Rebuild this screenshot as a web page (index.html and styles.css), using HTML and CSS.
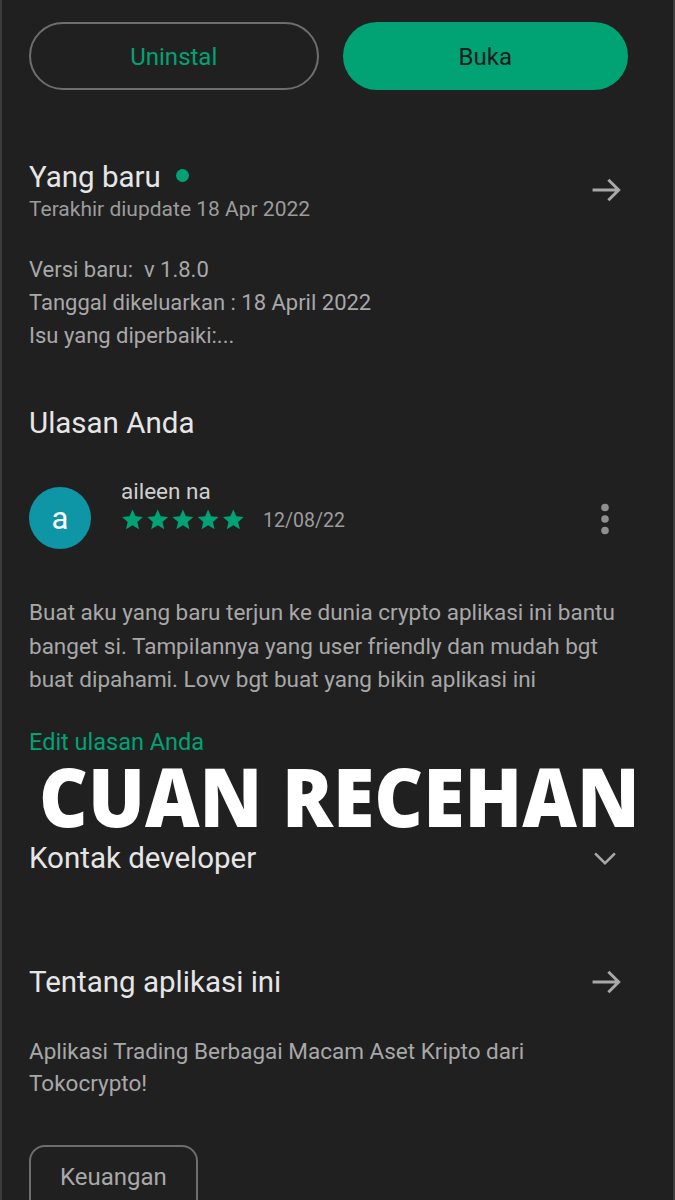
FILE: index.html
```html
<!DOCTYPE html>
<html>
  <head>
    <title>Tokocrypto - Detail Aplikasi</title>
    <link rel="stylesheet" href="styles.css">
  </head>
  <body>
    <div class="screen">
      <div class="actions">
        <button class="btn btn-outline">Uninstal</button>
        <button class="btn btn-fill">Buka</button>
      </div>

      <!-- Yang baru -->
      <section class="section whats-new">
        <div class="section-head">
          <div>
            <h2 class="title">Yang baru <span class="dot"></span></h2>
            <div class="sub">Terakhir diupdate 18 Apr 2022</div>
          </div>
          <svg class="arrow" width="38" height="38" viewBox="0 0 24 24">
            <path d="M3.5 12h16M13.5 5.5l6.5 6.5-6.5 6.5" fill="none" stroke="#a8a8a8" stroke-width="1.9"/>
          </svg>
        </div>
        <p class="body-text notes">
          Versi baru:&nbsp; v 1.8.0<br>
          Tanggal dikeluarkan : 18 April 2022<br>
          Isu yang diperbaiki:...
        </p>
      </section>

      <!-- Ulasan -->
      <section class="section review">
        <h2 class="title">Ulasan Anda</h2>
        <div class="reviewer">
          <div class="avatar">a</div>
          <div class="reviewer-info">
            <div class="name">aileen na</div>
            <div class="rating">
              <span class="stars">
                <svg width="124" height="24" viewBox="0 0 124 24">
                  <g fill="#01a274">
                    <path id="star" d="M11.5 1.5l3 6.8 7.4.7-5.6 4.9 1.7 7.3-6.5-3.9-6.5 3.9 1.7-7.3L1.1 9l7.4-.7z"/>
                    <use href="#star" x="25.2"/>
                    <use href="#star" x="50.4"/>
                    <use href="#star" x="75.6"/>
                    <use href="#star" x="100.8"/>
                  </g>
                </svg>
              </span>
              <span class="date">12/08/22</span>
            </div>
          </div>
          <svg class="more" width="10" height="32" viewBox="0 0 10 32">
            <circle cx="5" cy="4.5" r="3.8" fill="#8f8f8f"/>
            <circle cx="5" cy="16" r="3.8" fill="#8f8f8f"/>
            <circle cx="5" cy="27.5" r="3.8" fill="#8f8f8f"/>
          </svg>
        </div>
        <p class="body-text comment">
          Buat aku yang baru terjun ke dunia crypto aplikasi ini bantu<br>
          banget si. Tampilannya yang user friendly dan mudah bgt<br>
          buat dipahami. Lovv bgt buat yang bikin aplikasi ini
        </p>
        <a class="edit-link">Edit ulasan Anda</a>
        <div class="banner">CUAN RECEHAN</div>
      </section>

      <!-- Kontak -->
      <section class="section contact">
        <div class="section-head center">
          <h2 class="title">Kontak developer</h2>
          <svg class="chevron" width="28" height="28" viewBox="0 0 24 24">
            <path d="M3.5 8l8.5 8.5 8.5-8.5" fill="none" stroke="#a8a8a8" stroke-width="2.2"/>
          </svg>
        </div>
      </section>

      <!-- Tentang -->
      <section class="section about">
        <div class="section-head center">
          <h2 class="title">Tentang aplikasi ini</h2>
          <svg class="arrow" width="38" height="38" viewBox="0 0 24 24">
            <path d="M3.5 12h16M13.5 5.5l6.5 6.5-6.5 6.5" fill="none" stroke="#a8a8a8" stroke-width="1.9"/>
          </svg>
        </div>
        <p class="body-text desc">
          Aplikasi Trading Berbagai Macam Aset Kripto dari<br>
          Tokocrypto!
        </p>
        <div class="chip">Keuangan</div>
      </section>
    </div>
  </body>
</html>
```

FILE: styles.css
```css
html,
body {
  margin: 0;
  padding: 0;
  background-color: #202020;
}

body {
  font-family: Roboto, "Noto Sans", sans-serif;
  color: #e3e3e3;
}

.screen {
  width: 675px;
  height: 1200px;
  box-sizing: border-box;
  border-left: 2px solid #3c3c3c;
  border-right: 2px solid #3c3c3c;
  padding: 22px 45px 0 27px;
  overflow: hidden;
}

.actions {
  display: flex;
  gap: 24px;
}

.btn {
  flex: 1;
  height: 68px;
  border-radius: 34px;
  font-family: Roboto, sans-serif;
  font-size: 24px;
  padding-top: 3px;
  cursor: pointer;
}

.btn-outline {
  background: transparent;
  border: 2px solid #6e6e6e;
  color: #01a274;
}

.btn-fill {
  background-color: #01a274;
  border: none;
  color: #1c1c1c;
}

.section {
  margin: 0;
}

.section-head {
  display: flex;
  justify-content: space-between;
  align-items: flex-start;
}

.section-head.center {
  align-items: center;
}

.title {
  margin: 0;
  font-size: 29.5px;
  line-height: 36px;
  font-weight: 400;
  color: #e6e6e6;
  display: flex;
  align-items: center;
}

.dot {
  display: inline-block;
  width: 13px;
  height: 13px;
  border-radius: 50%;
  background-color: #01a274;
  margin-left: 15px;
  margin-top: -3px;
}

.sub {
  font-size: 21px;
  line-height: 28px;
  color: #9c9c9c;
}

.whats-new {
  padding-top: 69px;
}

.whats-new .arrow {
  margin-top: 12px;
  margin-right: 3px;
}

.about .arrow {
  margin-right: 3px;
}

.body-text {
  margin: 0;
  font-size: 22.5px;
  line-height: 33px;
  color: #a8a8a8;
}

.notes {
  margin-top: 30px;
  font-size: 22px;
}

.review {
  padding-top: 53px;
}

.reviewer {
  display: flex;
  align-items: flex-start;
  margin-top: 36px;
}

.avatar {
  width: 62px;
  height: 62px;
  border-radius: 50%;
  background-color: #0e95a6;
  color: #ffffff;
  font-size: 31px;
  display: flex;
  align-items: center;
  justify-content: center;
  margin-top: 10px;
  flex-shrink: 0;
}

.reviewer-info {
  flex: 1;
  margin-left: 30px;
}

.name {
  font-size: 22.5px;
  line-height: 28px;
  color: #cfcfcf;
}

.rating {
  display: flex;
  align-items: center;
  height: 26px;
  margin-top: 2px;
}

.stars svg {
  display: block;
}

.date {
  margin-left: 18px;
  font-size: 19.5px;
  color: #9c9c9c;
}

.more {
  margin-top: 26px;
  margin-right: 18px;
}

.comment {
  margin-top: 47px;
  line-height: 33.5px;
}

.edit-link {
  display: block;
  margin-top: 30px;
  font-size: 23.5px;
  line-height: 30px;
  color: #01a274;
}

.banner {
  font-family: "Open Sans", sans-serif;
  font-weight: 800;
  font-size: 81px;
  line-height: 64px;
  color: #ffffff;
  margin-left: 10px;
  margin-top: 7px;
  white-space: nowrap;
  transform: scaleX(0.93);
  transform-origin: left center;
}

.contact {
  margin-top: 12px;
}

.chevron {
  margin-right: 9px;
}

.about {
  padding-top: 87px;
}

.desc {
  margin-top: 34px;
  line-height: 32px;
}

.chip {
  display: inline-block;
  margin-top: 46px;
  padding: 16px 29px 30px;
  border: 2px solid #6e6e6e;
  border-radius: 16px;
  font-size: 24px;
  line-height: 28px;
  color: #a8a8a8;
}
```
